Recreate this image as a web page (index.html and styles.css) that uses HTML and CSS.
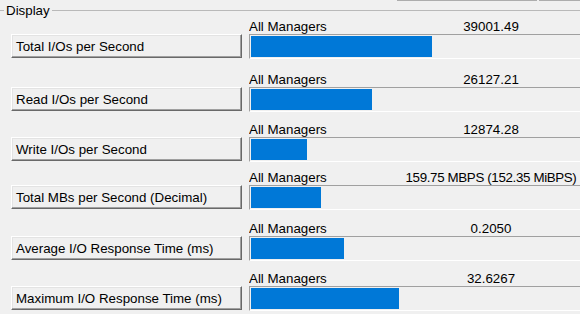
FILE: index.html
```html
<!DOCTYPE html>
<html lang="en">
<head>
    <meta charset="UTF-8">
    <meta name="viewport" content="width=device-width, initial-scale=1.0">
    <title>Display</title>
    <link rel="stylesheet" href="styles.css">
</head>
<body>
    <div class="topbar">
        <div class="topbar-box wide"></div>
        <div class="topbar-box"></div>
    </div>

    <div class="group-title">
        <span class="group-line short"></span>
        <span class="group-text">Display</span>
        <span class="group-line"></span>
    </div>

    <div class="stats">
        <div class="row">
            <button class="stat-btn">Total I/Os per Second</button>
            <div class="meter">
                <div class="meter-head"><span class="meter-name">All Managers</span><span class="meter-value">39001.49</span></div>
                <div class="meter-frame"><div class="meter-fill" style="width:181px"></div></div>
            </div>
        </div>
        <div class="row">
            <button class="stat-btn">Read I/Os per Second</button>
            <div class="meter">
                <div class="meter-head"><span class="meter-name">All Managers</span><span class="meter-value">26127.21</span></div>
                <div class="meter-frame"><div class="meter-fill" style="width:121px"></div></div>
            </div>
        </div>
        <div class="row">
            <button class="stat-btn">Write I/Os per Second</button>
            <div class="meter">
                <div class="meter-head"><span class="meter-name">All Managers</span><span class="meter-value">12874.28</span></div>
                <div class="meter-frame"><div class="meter-fill" style="width:56px"></div></div>
            </div>
        </div>
        <div class="row">
            <button class="stat-btn">Total MBs per Second (Decimal)</button>
            <div class="meter">
                <div class="meter-head"><span class="meter-name">All Managers</span><span class="meter-value long">159.75 MBPS (152.35 MiBPS)</span></div>
                <div class="meter-frame"><div class="meter-fill" style="width:70px"></div></div>
            </div>
        </div>
        <div class="row">
            <button class="stat-btn">Average I/O Response Time (ms)</button>
            <div class="meter">
                <div class="meter-head"><span class="meter-name">All Managers</span><span class="meter-value">0.2050</span></div>
                <div class="meter-frame"><div class="meter-fill" style="width:93px"></div></div>
            </div>
        </div>
        <div class="row">
            <button class="stat-btn">Maximum I/O Response Time (ms)</button>
            <div class="meter">
                <div class="meter-head"><span class="meter-name">All Managers</span><span class="meter-value">32.6267</span></div>
                <div class="meter-frame"><div class="meter-fill" style="width:148px"></div></div>
            </div>
        </div>
    </div>
</body>
</html>
```

FILE: styles.css
```css
body { margin: 0; background: #f0f0f0; color: #000; font-family: "Liberation Sans", Arial, sans-serif; font-size: 13.33px; overflow: hidden; }

.topbar { display: flex; height: 1px; padding-left: 397px; gap: 2px; }
.topbar-box { width: 41px; border-bottom: 1px solid #adadad; }
.topbar-box.wide { width: 140px; }

.group-title { display: flex; align-items: center; height: 15px; margin-top: 2px; }
.group-line { flex: 1; height: 1px; background: #b9b9b9; }
.group-line.short { flex: none; width: 4px; }
.group-text { line-height: 15px; padding: 0 2px; }

.stats { display: grid; grid-template-rows: 53px 50px 48px 51px 50px 50px; margin-top: 1px; }
.row { display: grid; grid-template-columns: 231px 1fr; column-gap: 7px; padding-left: 11px; align-items: start; }

.stat-btn { margin: 15px 0 0; height: 24px; padding: 0 4px; text-align: left; font: inherit; color: #000; background: #f0f0f0; border: 1px solid; border-color: #fff #696969 #696969 #fff; box-shadow: inset -1px -1px #a0a0a0, inset 1px 1px #e3e3e3; }

.meter { overflow: hidden; }
.meter-head { display: flex; line-height: 15px; white-space: nowrap; }
.meter-name { width: 153px; flex: none; }
.meter-value { width: 178px; flex: none; text-align: center; }
.meter-value.long { letter-spacing: -0.35px; }
.meter-frame { width: 360px; height: 21px; padding: 1px; border: 1px solid; border-color: #a0a0a0 #fff #fff #a0a0a0; }
.meter-fill { height: 21px; background: #0078d7; }
```
